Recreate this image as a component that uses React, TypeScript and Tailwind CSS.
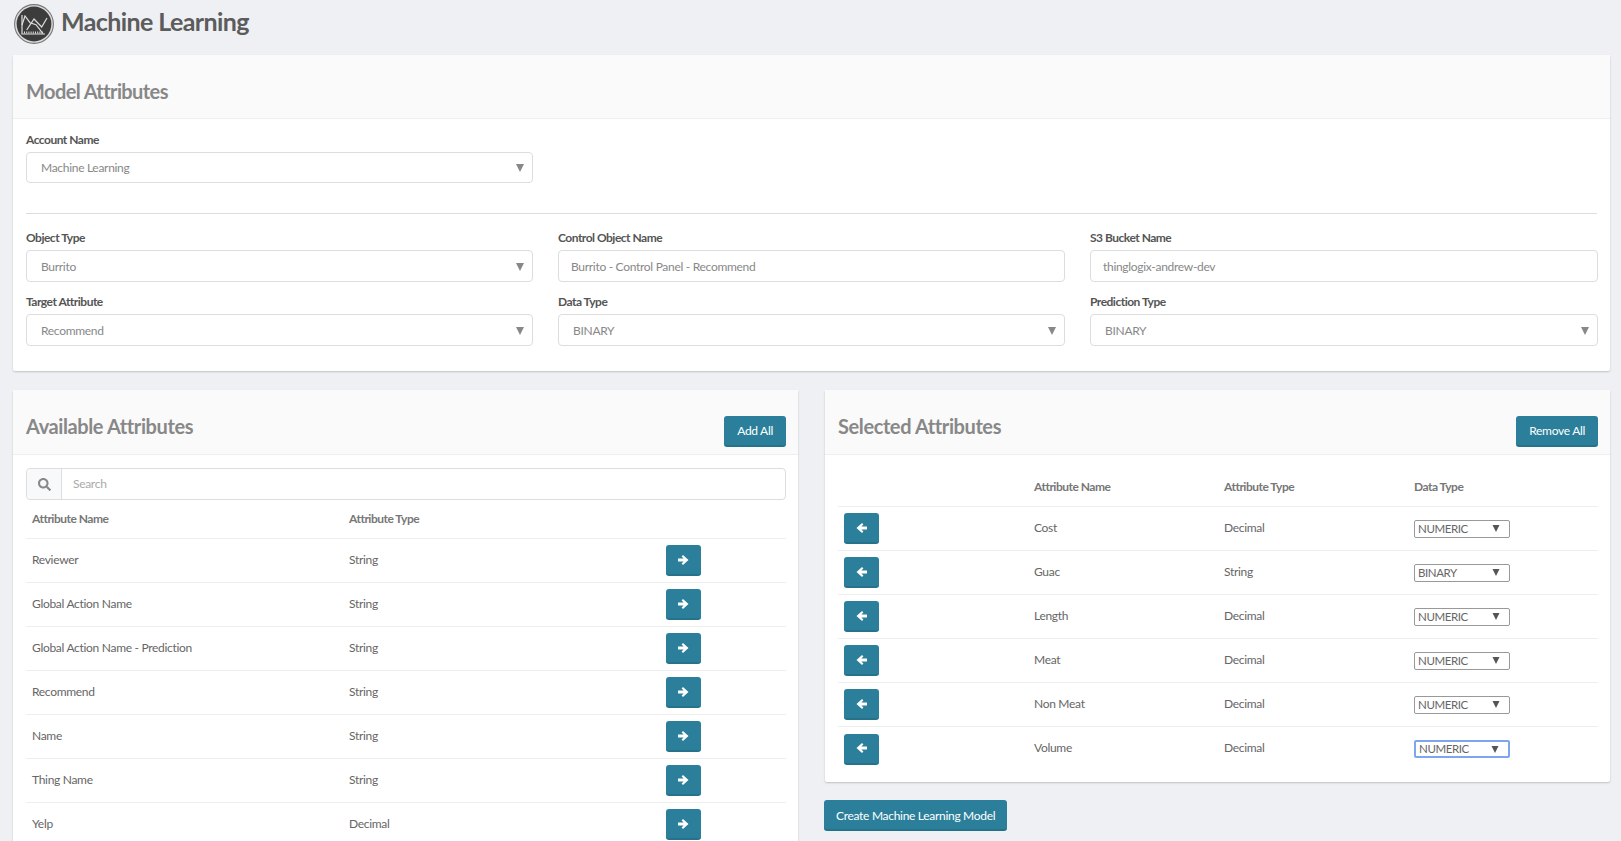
import { FaSearch } from 'react-icons/fa';

const availableRows = [
  ['Reviewer', 'String'],
  ['Global Action Name', 'String'],
  ['Global Action Name - Prediction', 'String'],
  ['Recommend', 'String'],
  ['Name', 'String'],
  ['Thing Name', 'String'],
  ['Yelp', 'Decimal'],
];

const selectedRows = [
  ['Cost', 'Decimal', 'NUMERIC'],
  ['Guac', 'String', 'BINARY'],
  ['Length', 'Decimal', 'NUMERIC'],
  ['Meat', 'Decimal', 'NUMERIC'],
  ['Non Meat', 'Decimal', 'NUMERIC'],
  ['Volume', 'Decimal', 'NUMERIC'],
];

const Logo = () => (
  <svg viewBox="0 0 40 40" className="w-10 h-10 shrink-0">
    <circle cx="20" cy="20" r="19.4" fill="#dcdcdc" stroke="#777" strokeWidth="1.1" />
    <circle cx="20" cy="20" r="17.4" fill="#3c3c3c" />
    <g fill="none" stroke="#dedede" strokeWidth="1.2">
      <path d="M8 11v19h23" />
      <path d="M8 21l3-9 5 6.700 6 2 7 9" />
      <path d="M12.700 26L20 15l7.700 8L33 14" />
    </g>
    <path d="M10 28.500h19" stroke="#dedede" strokeWidth="2" strokeDasharray="1 1.200" fill="none" />
  </svg>
);

const Triangle = ({ className }: { className: string }) => (
  <svg viewBox="0 0 8 8" className={className}>
    <path d="M0 0h8L4 8z" fill="currentColor" />
  </svg>
);

const ArrowRight = () => (
  <svg viewBox="0 0 11 10" className="w-[11px] h-[10px]">
    <path d="M0 3.500h5.600L3.600 1.500 5 0l5.500 5L5 10 3.600 8.500l2-2H0z" fill="currentColor" />
  </svg>
);

const ArrowLeft = () => (
  <svg viewBox="0 0 11 10" className="w-[11px] h-[10px]">
    <path d="M11 3.500H5.400l2-2L6 0 .5 5 6 10l1.400-1.500-2-2H11z" fill="currentColor" />
  </svg>
);

const Label = ({ children }: { children: string }) => (
  <div className="h-5 mb-[2px] text-[12px] leading-5 font-bold tracking-[-0.5px] text-[#555]">{children}</div>
);

const Select = ({ value, className = 'h-8' }: { value: string; className?: string }) => (
  <div
    className={`flex items-center justify-between pt-px pl-[14px] pr-[8px] border border-[#ddd] rounded-[4px] bg-white text-[12px] tracking-[-0.3px] text-[#888] ${className}`}
  >
    <span>{value}</span>
    <Triangle className="w-2 h-2 text-[#888]" />
  </div>
);

const Input = ({ value }: { value: string }) => (
  <input
    readOnly
    value={value}
    className="w-full h-8 pt-px px-3 border border-[#ddd] rounded-[4px] bg-white text-[12px] tracking-[-0.3px] text-[#888] outline-none"
  />
);

const TealButton = ({ children, className = '' }: { children: React.ReactNode; className?: string }) => (
  <button
    type="button"
    className={`flex items-center justify-center h-[31px] bg-[#2b7f9a] border-b-2 border-[#26728b] rounded-[3px] text-[12px] tracking-[-0.3px] text-white ${className}`}
  >
    {children}
  </button>
);

const Cell = ({ children }: { children: string }) => <div className="mb-[2px]">{children}</div>;

const CardHead = ({ title, action }: { title: string; action: string }) => (
  <div className="flex items-end justify-between h-[65px] pl-[13px] pr-3 pb-[7px] bg-[#fafafa] border-b border-[#eee]">
    <h2 className="mb-[7px] text-[20px] leading-7 font-bold tracking-[-0.4px] text-[#888]">{title}</h2>
    <TealButton className="px-[13px]">{action}</TealButton>
  </div>
);

const SmallSelect = ({ value, focused }: { value: string; focused?: boolean }) => (
  <div
    className={`flex items-center justify-between w-[96px] h-[18px] pl-[3px] pr-[9px] bg-white rounded-[2px] text-[11.5px] tracking-[-0.4px] text-[#666] ${
      focused ? 'border-2 border-[#7da6ee]' : 'border border-[#999]'
    }`}
  >
    <span>{value}</span>
    <Triangle className="w-[8px] h-[7px] text-[#555]" />
  </div>
);

export default function App() {
  return (
    <div className="h-screen overflow-hidden bg-[#eef0f4] font-['Lato','Liberation_Sans',sans-serif]">
      <header className="flex h-[55px] pt-1 pl-[14px] gap-[7px]">
        <Logo />
        <h1 className="text-[25px] leading-[34px] font-bold tracking-[-0.6px] text-[#5c5c5c]">Machine Learning</h1>
      </header>

      <section className="ml-[13px] mr-[11px] bg-white rounded-[2px] shadow-[0_1px_2px_rgba(0,0,0,0.2)]">
        <div className="h-16 pt-[22px] pl-[13px] bg-[#fafafa] border-b border-[#eee]">
          <h2 className="text-[20px] leading-7 font-bold tracking-[-0.6px] text-[#888]">Model Attributes</h2>
        </div>
        <div className="px-[13px] pt-[11px] pb-[25px]">
          <div className="w-[507px]">
            <Label>Account Name</Label>
            <Select value="Machine Learning" className="h-[31px]" />
          </div>
          <hr className="mt-[30px] mb-[14px] border-[#ddd]" />
          <div className="grid grid-cols-[507px_507px_508px] gap-x-[25px] gap-y-[10px]">
            <div>
              <Label>Object Type</Label>
              <Select value="Burrito" />
            </div>
            <div>
              <Label>Control Object Name</Label>
              <Input value="Burrito - Control Panel - Recommend" />
            </div>
            <div>
              <Label>S3 Bucket Name</Label>
              <Input value="thinglogix-andrew-dev" />
            </div>
            <div>
              <Label>Target Attribute</Label>
              <Select value="Recommend" />
            </div>
            <div>
              <Label>Data Type</Label>
              <Select value="BINARY" />
            </div>
            <div>
              <Label>Prediction Type</Label>
              <Select value="BINARY" />
            </div>
          </div>
        </div>
      </section>

      <div className="grid grid-cols-[785px_785px] gap-x-[27px] items-start ml-[13px] mt-[19px]">
        <section className="bg-white rounded-[2px] shadow-[0_1px_2px_rgba(0,0,0,0.2)]">
          <CardHead title="Available Attributes" action="Add All" />
          <div className="pl-[13px] pr-3 pt-[13px]">
            <div className="flex h-8 border border-[#ddd] rounded-[4px] text-[12px] tracking-[-0.3px]">
              <div className="flex items-center justify-center w-[35px] bg-[#f8f9fa] border-r border-[#ddd] rounded-l-[4px] text-[#888]">
                <FaSearch className="w-[13px] h-[13px]" />
              </div>
              <input
                readOnly
                placeholder="Search"
                className="flex-1 px-[11px] outline-none placeholder:text-[#aaa]"
              />
            </div>
            <div className="grid grid-cols-[317px_317px_1fr] items-center h-[39px] pl-[6px] border-b border-[#eee] text-[12px] font-bold tracking-[-0.5px] text-[#777]">
              <div>Attribute Name</div>
              <div>Attribute Type</div>
            </div>
            {availableRows.map(([name, type]) => (
              <div
                key={name}
                className="grid grid-cols-[317px_317px_1fr] items-center h-11 pl-[6px] border-b border-[#eee] text-[12px] tracking-[-0.3px] text-[#666]"
              >
                <Cell>{name}</Cell>
                <Cell>{type}</Cell>
                <TealButton className="w-[35px]">
                  <ArrowRight />
                </TealButton>
              </div>
            ))}
          </div>
        </section>

        <div>
          <section className="bg-white rounded-[2px] shadow-[0_1px_2px_rgba(0,0,0,0.2)]">
            <CardHead title="Selected Attributes" action="Remove All" />
            <div className="pl-[13px] pr-3 pb-[11px]">
              <div className="grid grid-cols-[190px_190px_190px_1fr] items-end h-[52px] pl-[6px] pb-[10px] border-b border-[#eee] text-[12px] font-bold tracking-[-0.5px] text-[#777]">
                <div />
                <div>Attribute Name</div>
                <div>Attribute Type</div>
                <div>Data Type</div>
              </div>
              {selectedRows.map(([name, type, dataType], i) => (
                <div
                  key={name}
                  className={`grid grid-cols-[190px_190px_190px_1fr] items-center h-11 pl-[6px] text-[12px] tracking-[-0.3px] text-[#666] ${
                    i < selectedRows.length - 1 ? 'border-b border-[#eee]' : ''
                  }`}
                >
                  <TealButton className="w-[35px]">
                    <ArrowLeft />
                  </TealButton>
                  <Cell>{name}</Cell>
                  <Cell>{type}</Cell>
                  <SmallSelect value={dataType} focused={name === 'Volume'} />
                </div>
              ))}
            </div>
          </section>
          <TealButton className="mt-[18px] -ml-px px-3 pt-[2px]">Create Machine Learning Model</TealButton>
        </div>
      </div>
    </div>
  );
}
